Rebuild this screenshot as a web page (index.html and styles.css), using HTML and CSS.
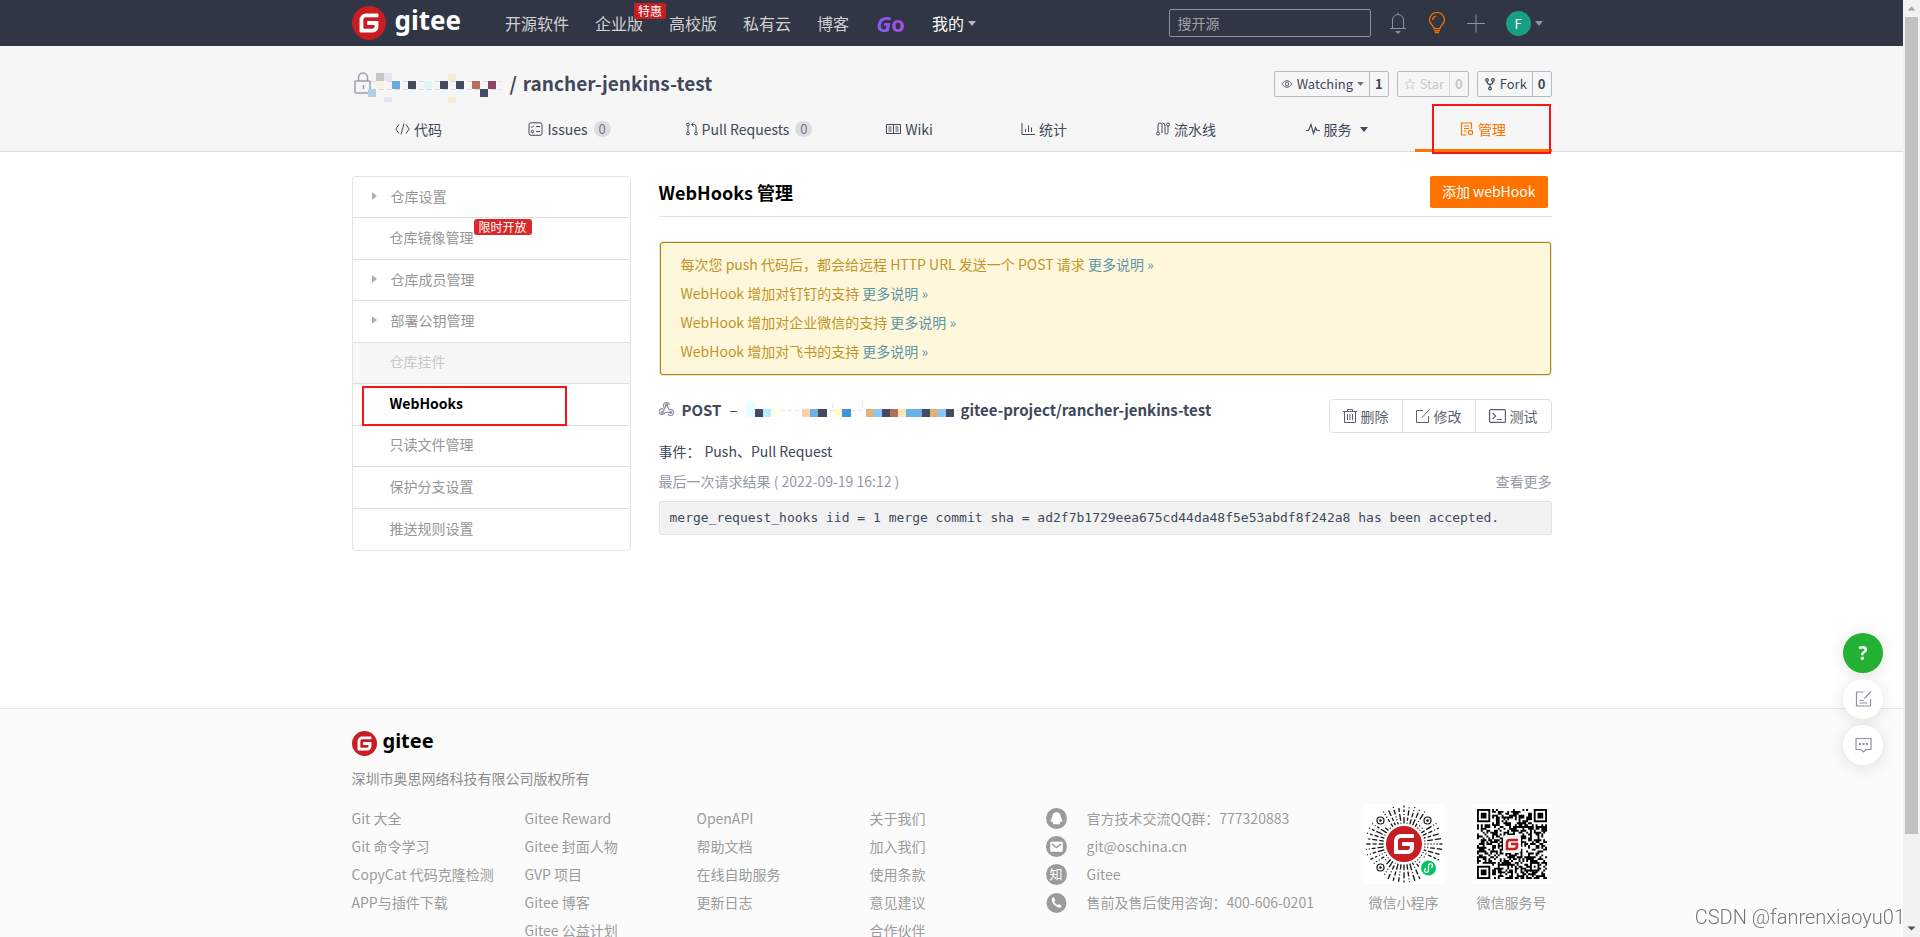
FILE: index.html
```html
<!DOCTYPE html>
<html lang="zh-CN">
<head>
<meta charset="utf-8">
<title>WebHooks 管理 - rancher-jenkins-test - Gitee</title>
<link rel="stylesheet" href="styles.css">
</head>
<body>
<svg class="defs" aria-hidden="true">
  <symbol id="g-mark" viewBox="0 0 24 24">
    <circle cx="12" cy="12" r="12" fill="#c71d23"/>
    <path fill="#fff" d="M18.074 5.333c.328 0 .593.266.592.593v1.482a.594.594 0 0 1-.593.592H9.777c-.982 0-1.778.796-1.778 1.778v5.63c0 .327.266.592.593.592h5.63c.982 0 1.778-.796 1.778-1.778v-.296a.593.593 0 0 0-.592-.593h-4.15a.592.592 0 0 1-.592-.592v-1.482a.593.593 0 0 1 .593-.592h6.815c.327 0 .593.265.593.592v3.408a4 4 0 0 1-4 4H5.926a.593.593 0 0 1-.593-.593V9.778a4.444 4.444 0 0 1 4.445-4.444h8.296Z"/>
  </symbol>
  <symbol id="caret" viewBox="0 0 10 6"><path d="M0 0h10L5 6z" fill="currentColor"/></symbol>
</svg>

<header class="topbar">
  <div class="container topbar-row">
    <a class="logo" href="#"><svg class="logo-mark"><use href="#g-mark"/></svg><span class="logo-word">gitee</span></a>
    <nav class="topnav">
      <a href="#">开源软件</a>
      <a href="#" class="has-badge">企业版<span class="sale">特惠</span></a>
      <a href="#">高校版</a>
      <a href="#">私有云</a>
      <a href="#">博客</a>
      <a href="#" class="go"><i>G</i>o</a>
      <a href="#" class="mine">我的<svg class="caret"><use href="#caret"/></svg></a>
    </nav>
    <div class="tools">
      <input class="search" type="text" placeholder="搜开源" aria-label="搜开源">
      <a href="#" aria-label="通知"><svg class="tool-icon" viewBox="0 0 18 22" fill="none" stroke="#8c92a4"><path d="M1 16.5h16M3.5 16.5V8a5.5 5.5 0 0 1 11 0v8.5M9 2.500V.5"/><path d="M6 19h6l-3 3z" fill="#8c92a4" stroke="none"/></svg></a>
      <a href="#" aria-label="动态"><svg class="tool-icon" viewBox="0 0 18 22" fill="none" stroke="#fe7300" stroke-width="1.2"><path d="M6 16.5c0-3-4.500-4-4.500-8.500a7.500 7.500 0 0 1 15 0c0 4.500-4.500 5.500-4.500 8.500zM4.500 8A4.500 4.500 0 0 1 8 4"/><path d="M6 18.500h6M7 20.500h4" stroke-width="1.5"/></svg></a>
      <a href="#" aria-label="新建"><svg class="tool-icon" viewBox="0 0 18 22" stroke="#8c92a4"><path d="M0 11.500h18M9 2.500v18"/></svg></a>
      <a href="#" class="user"><span class="avatar">F</span><svg class="caret"><use href="#caret"/></svg></a>
    </div>
  </div>
</header>

<section class="repo-head">
  <div class="container">
    <div class="repo-row">
      <h2 class="repo-title">
        <svg class="repo-owner" viewBox="0 0 150 32" shape-rendering="crispEdges">
          <g fill="none" stroke="#9ba0b0" stroke-width="1.5" shape-rendering="auto"><rect x="1" y="9" width="15" height="12" rx="1"/><path d="M4.500 9V5.500a4.500 4.500 0 0 1 9 0V9M9.500 13v4"/></g>
          <path d="M17 9h130M17 17h130" stroke="#dcdcdc" stroke-dasharray="5 3"/>
          <g fill="#454a60"><path d="M54 9h8v8h-8zM86 9h8v8h-8zM102 9h8v8h-8zM126 17h6v8h-6z"/></g>
          <path fill="#c8c5c8" d="M22 1h8v8h-8z"/><path fill="#e3e6f2" d="M30 1h8v8h-8zM30 25h8v5h-8z"/>
          <path fill="#f6f4e0" d="M22 9h8v8h-8z"/><path fill="#68a9e0" d="M38 9h8v8h-8z"/><path fill="#dff5f6" d="M70 9h8v8h-8z"/>
          <path fill="#b07058" d="M118 9h8v8h-8z"/><path fill="#8c4560" d="M134 9h8v8h-8z"/><path fill="#464a6b" d="M126 17h8v8h-8z"/>
          <path fill="#b2d1e8" d="M14 17h8v8h-8z"/><path fill="#f5edd0" d="M94 2h8v7h-8zM94 25h8v6h-8z"/>
        </svg>
        <span>/</span> <a href="#">rancher-jenkins-test</a>
      </h2>
      <div class="repo-actions">
        <div class="pair"><button type="button"><svg class="i12" viewBox="0 0 14 14" fill="none" stroke="currentColor"><path d="M1 7q6-8 12 0q-6 8-12 0z"/><circle cx="7" cy="7" r="2"/></svg>Watching<svg class="caret"><use href="#caret"/></svg></button><a href="#">1</a></div>
        <div class="pair off"><button type="button"><svg class="i12" viewBox="0 0 14 14" fill="none" stroke="currentColor"><path d="M7 1.500l1.600 3.700 4 .4-3 2.700.9 4L7 10.200l-3.500 2.100.9-4-3-2.700 4-.4z"/></svg>Star</button><a href="#">0</a></div>
        <div class="pair"><button type="button"><svg class="i12" viewBox="0 0 12 14" fill="none" stroke="currentColor" stroke-width="1.2"><circle cx="3" cy="3" r="1.300"/><circle cx="9" cy="3" r="1.300"/><circle cx="6" cy="11.500" r="1.300"/><path d="M3 4.500Q3 7 6 7.500Q9 7 9 4.500M6 7.500V10"/></svg>Fork</button><a href="#">0</a></div>
      </div>
    </div>
    <nav class="tabs">
      <a href="#"><svg class="i15" viewBox="0 0 15 14" fill="none" stroke="currentColor"><path d="M4 2.500L.8 7 4 11.500M11 2.500L14.200 7 11 11.500M9 1.500l-3 11"/></svg>代码</a>
      <a href="#"><svg class="i15" viewBox="0 0 15 14" fill="none" stroke="currentColor"><rect x="1" y=".8" width="13" height="12.500" rx="2"/><path d="M8 4.500h4M8 9.500h4M3 4.500l1 1 2-2"/><circle cx="4.500" cy="9.500" r="1.200"/></svg>Issues<span class="count">0</span></a>
      <a href="#"><svg class="i12" viewBox="0 0 12 14" fill="none" stroke="currentColor"><circle cx="2" cy="2.500" r="1.400"/><circle cx="2" cy="11.500" r="1.400"/><circle cx="10" cy="11.500" r="1.400"/><path d="M2 4v6M10 10V4.500q0-2-2-2H5.500M7.500.5l-2 2 2 2"/></svg>Pull Requests<span class="count">0</span></a>
      <a href="#"><svg class="i15" viewBox="0 0 15 14" fill="none" stroke="currentColor"><path d="M.5 2.500h14v9H.5zM7.500 2.500v9M2.500 5h3M2.500 7h3M2.500 9h3M9.500 5h3M9.500 7h3M9.500 9h3"/></svg>Wiki</a>
      <a href="#"><svg class="i14" viewBox="0 0 14 14" fill="none" stroke="currentColor"><path d="M1 1v11.500h13M4.500 10V7M7.500 10V3.500M10.500 10V5.500"/></svg>统计</a>
      <a href="#"><svg class="i14" viewBox="0 0 14 14" fill="none" stroke="currentColor"><circle cx="2" cy="11.500" r="1.500"/><circle cx="12" cy="2.500" r="1.500"/><path d="M2 10V3a2 2 0 0 1 4 0v8M9 3v7.500a1.500 1.500 0 0 0 3 0V4M9 3.500Q9 1 6.500 1"/></svg>流水线</a>
      <a href="#"><svg class="i14" viewBox="0 0 14 14" fill="none" stroke="currentColor" stroke-width="1.2"><path d="M0 8.500h2.500L5 2.500l2.500 9 2-6 1.500 3H14"/></svg>服务<svg class="caret"><use href="#caret"/></svg></a>
      <a href="#" class="active"><svg class="i14" viewBox="0 0 14 14" fill="none" stroke="currentColor" stroke-width="1.2"><path d="M6.500 13H1.500V1h10v6M4 4h5M4 6.500h5M4 9h2.500"/><circle cx="10.500" cy="10.500" r="2.200"/></svg>管理<span class="mark"></span></a>
    </nav>
  </div>
</section>

<main class="container content">
  <ul class="side">
    <li class="sub"><a href="#">仓库设置</a></li>
    <li><a href="#">仓库镜像管理<span class="limited">限时开放</span></a></li>
    <li class="sub"><a href="#">仓库成员管理</a></li>
    <li class="sub"><a href="#">部署公钥管理</a></li>
    <li class="off"><a href="#">仓库挂件</a></li>
    <li class="current"><a href="#">WebHooks</a><span class="mark"></span></li>
    <li><a href="#">只读文件管理</a></li>
    <li><a href="#">保护分支设置</a></li>
    <li><a href="#">推送规则设置</a></li>
  </ul>
  <div class="panel">
    <div class="panel-head"><h1>WebHooks 管理</h1><button type="button" class="primary">添加 webHook</button></div>
    <div class="notice">
      <p>每次您 push 代码后，都会给远程 HTTP URL 发送一个 POST 请求 <a href="#">更多说明 »</a></p>
      <p>WebHook 增加对钉钉的支持 <a href="#">更多说明 »</a></p>
      <p>WebHook 增加对企业微信的支持 <a href="#">更多说明 »</a></p>
      <p>WebHook 增加对飞书的支持 <a href="#">更多说明 »</a></p>
    </div>
    <div class="hook">
      <div class="hook-title">
        <svg class="hook-icon" viewBox="0 0 15 15" fill="none" stroke="#8c92a4" stroke-width="1.2"><path d="M5.200 6.500A3 3 0 1 1 10.400 4M7.500 3.800l2.600 5A3 3 0 1 1 9 13M7.500 3.800L4.200 10.500M4.500 8A3 3 0 1 0 6 11.500h5.500"/><circle cx="7.500" cy="3.800" r="1"/><circle cx="3.300" cy="11.300" r="1"/><circle cx="11.700" cy="11.300" r="1"/></svg>
        <b>POST</b><span>–</span>
        <svg class="hook-url" viewBox="0 0 215 18" shape-rendering="crispEdges">
          <path d="M0 9h214M17 6v12M86 3v6M116 2v6" stroke="#e2e2e6" stroke-dasharray="4 3"/>
          <path fill="#e5ffff" d="M0 1h9v15H0z"/><path fill="#b5ecff" d="M17 8h8v8h-8z"/><path fill="#ffffe6" d="M25 8h7v8h-7z"/>
          <path fill="#454a60" d="M9 8h8v8H9zM72 8h9v8h-9zM136 8h8v8h-8zM176 8h8v8h-8zM200 8h8v8h-8z"/>
          <path fill="#ffd0a0" d="M56 8h8v8h-8z"/><path fill="#6cb0ea" d="M64 8h8v8h-8zM160 8h16v8h-16z"/>
          <path fill="#ffffcc" d="M88 8h8v8h-8z"/><path fill="#3f93d8" d="M96 8h9v8h-9z"/>
          <path fill="#e3b07c" d="M120 8h8v8h-8zM184 8h8v8h-8z"/><path fill="#88c8ff" d="M128 8h8v8h-8zM192 8h8v8h-8z"/>
          <path fill="#b07058" d="M144 8h8v8h-8z"/><path fill="#ffe5b5" d="M152 8h8v8h-8z"/>
        </svg>
        <a href="#">gitee-project/rancher-jenkins-test</a>
      </div>
      <div class="hook-actions">
        <button type="button"><svg class="i14" viewBox="0 0 14 14" fill="none" stroke="currentColor"><path d="M0 2.500h14M4.500 2.500V.5h5v2M1.500 2.500v11h11v-11M4.500 5v6M7 5v6M9.500 5v6"/></svg>删除</button>
        <button type="button"><svg class="i14" viewBox="0 0 14 14" fill="none" stroke="currentColor"><path d="M7 1.500H.5v12h12V7M6 8.500L13.500.5"/></svg>修改</button>
        <button type="button"><svg class="i17" viewBox="0 0 17 14" fill="none" stroke="currentColor" stroke-width="1.2"><rect x=".6" y=".6" width="15.800" height="12.800" rx="1"/><path d="M3.500 4l3 3-3 3M8 10.500h5"/></svg>测试</button>
      </div>
    </div>
    <p class="events">事件：<span>Push、Pull Request</span></p>
    <div class="last"><span>最后一次请求结果 ( 2022-09-19 16:12 )</span><a href="#">查看更多</a></div>
    <pre class="result">merge_request_hooks iid = 1 merge commit sha = ad2f7b1729eea675cd44da48f5e53abdf8f242a8 has been accepted.</pre>
  </div>
</main>

<footer class="footer">
  <div class="container">
    <a class="logo small" href="#"><svg class="logo-mark"><use href="#g-mark"/></svg><span class="logo-word">gitee</span></a>
    <p class="company">深圳市奥思网络科技有限公司版权所有</p>
    <div class="foot-grid">
      <ul><li><a href="#">Git 大全</a></li><li><a href="#">Git 命令学习</a></li><li><a href="#">CopyCat 代码克隆检测</a></li><li><a href="#">APP与插件下载</a></li></ul>
      <ul><li><a href="#">Gitee Reward</a></li><li><a href="#">Gitee 封面人物</a></li><li><a href="#">GVP 项目</a></li><li><a href="#">Gitee 博客</a></li><li><a href="#">Gitee 公益计划</a></li></ul>
      <ul><li><a href="#">OpenAPI</a></li><li><a href="#">帮助文档</a></li><li><a href="#">在线自助服务</a></li><li><a href="#">更新日志</a></li></ul>
      <ul><li><a href="#">关于我们</a></li><li><a href="#">加入我们</a></li><li><a href="#">使用条款</a></li><li><a href="#">意见建议</a></li><li><a href="#">合作伙伴</a></li></ul>
      <ul class="contact">
        <li><svg viewBox="0 0 20 20"><circle cx="10" cy="10" r="10" fill="#9b9b9b"/><path fill="#fff" d="M10 4c-3 0-4 2.200-4 4.500C5 10 4.300 11.500 4.600 13c.3.500.9 0 1.300-.5.200.8.600 1.300 1.100 1.700-.8.500-.5 1.300.5 1.300h5c1 0 1.300-.8.500-1.300.5-.4.900-.9 1.100-1.700.4.500 1 1 1.300.5.300-1.500-.4-3-1.400-4.500C14 6.200 13 4 10 4z"/></svg><a href="#">官方技术交流QQ群：777320883</a></li>
        <li><svg viewBox="0 0 20 20"><circle cx="10" cy="10" r="10" fill="#9b9b9b"/><rect x="4" y="5.500" width="12" height="9.500" rx="1" fill="#fff"/><path d="M5.500 7.500L10 11l4.500-3.500" fill="none" stroke="#9b9b9b" stroke-width="1.3"/></svg><a href="#">git@oschina.cn</a></li>
        <li><span class="zhi">知</span><a href="#">Gitee</a></li>
        <li><svg viewBox="0 0 20 20"><circle cx="10" cy="10.500" r="9.500" fill="#9b9b9b"/><path d="M6 5.500Q4.500 7 6.500 10.500T13 15q1.500 0 2-1.500l-2.500-2-1.500 1Q8.500 11 7.700 9L9 8 7.500 5z" fill="#fff"/></svg><span>售前及售后使用咨询：400-606-0201</span></li>
      </ul>
      <figure><svg id="mini-code" viewBox="0 0 80 80"></svg><figcaption>微信小程序</figcaption></figure>
      <figure><svg id="qr-code" viewBox="0 0 80 80"></svg><figcaption>微信服务号</figcaption></figure>
    </div>
  </div>
</footer>

<div class="floats">
  <button type="button" class="help">?</button>
  <button type="button" aria-label="反馈"><svg viewBox="0 0 16 16" fill="none" stroke="#8c92a4" stroke-width="1.2"><path d="M8 1H1v14h14V8M15.500.5L9 7.500M4 9.500h4M4 12h8"/></svg></button>
  <button type="button" aria-label="留言"><svg viewBox="0 0 17 16" fill="none" stroke="#8c92a4" stroke-width="1.2"><path d="M1 1.500h15v11h-5L8.500 15 6 12.500H1z"/><path d="M4 7h2M7.500 7h2M11 7h2" stroke-width="2"/></svg></button>
</div>
<div class="scroll" aria-hidden="true"><svg viewBox="0 0 17 17"><path d="M4.500 10.500h8l-4-4z" fill="#a3a3a3"/></svg><span class="thumb"></span><svg viewBox="0 0 17 17"><path d="M4.500 6.500h8l-4 4z" fill="#505050"/></svg></div>
<div class="credit">CSDN @fanrenxiaoyu01</div>
<script src="codes.js"></script>
</body>
</html>
```

FILE: styles.css
```css
* { box-sizing: border-box; }
html, body { height: 100%; }
body {
  margin: 0;
  padding-right: 17px;
  overflow: hidden;
  background: #fff;
  color: #40485b;
  font: 14px/20px "Noto Sans CJK SC", "Open Sans", sans-serif;
}
h1, h2, p, ul, pre, figure { margin: 0; padding: 0; font-weight: inherit; }
ul { list-style: none; }
a { color: inherit; text-decoration: none; }
button, input { font: inherit; color: inherit; }
button { border: 0; background: none; padding: 0; }
svg { display: block; flex: none; }
.defs { position: absolute; width: 0; height: 0; }
.container { width: 1200px; max-width: 100%; margin: 0 auto; }
.caret { width: 8px; height: 5px; }
.i12 { width: 12px; height: 14px; }
.i14 { width: 14px; height: 14px; }
.i15 { width: 15px; height: 14px; }
.i17 { width: 17px; height: 14px; }

/* top bar */
.topbar { background: #303643; }
.topbar-row { display: flex; align-items: center; height: 46px; }
.logo { display: flex; align-items: center; gap: 9px; color: #fff; }
.logo-mark { width: 34px; height: 34px; }
.logo-word { font: bold 26px/30px "Noto Sans", sans-serif; padding-bottom: 6px; }
.topnav { display: flex; align-items: center; gap: 26px; margin-left: 44px; font-size: 16px; line-height: 24px; color: #d0d2d6; }
.has-badge { position: relative; }
.sale { position: absolute; left: 39px; top: -8px; width: 32px; background: #c71d23; color: #fff; border-radius: 2px; font-size: 12px; line-height: 16px; text-align: center; z-index: 1; }
.go { padding: 0 1px; font: bold 22px/24px "Open Sans", sans-serif; background: linear-gradient(90deg, #7b5cf5, #b04be8); background-clip: text; -webkit-background-clip: text; color: transparent; }
.mine { display: flex; align-items: center; gap: 4px; color: #fff; }
.mine .caret { color: #b4b7bd; }
.tools { display: flex; align-items: center; gap: 21px; margin-left: auto; padding-right: 9px; }
.search { width: 202px; height: 28px; margin-right: -3px; padding: 0 8px; background: transparent; border: 1px solid #8c92a4; border-radius: 2px; color: #fff; }
.search::placeholder { color: #a0a2a8; opacity: 1; }
.tool-icon { width: 18px; height: 22px; }
.user { display: flex; align-items: center; gap: 4px; color: #8c92a4; }
.avatar { width: 25px; height: 25px; border-radius: 50%; background: #17a086; color: #fff; font-size: 13px; line-height: 25px; text-align: center; }

/* repository header */
.repo-head { background: #f6f6f6; border-bottom: 1px solid #dcddde; }
.repo-row { display: flex; justify-content: space-between; padding-top: 24px; height: 62px; }
.repo-title { display: flex; gap: 6px; font-weight: 700; font-size: 19px; line-height: 26px; }
.repo-owner { width: 150px; height: 32px; margin: 2px 0 0 2px; }
.repo-actions { display: flex; gap: 8px; align-items: flex-start; }
.pair { display: flex; height: 26px; margin-top: 1px; border: 1px solid #b9bbc8; border-radius: 2px; line-height: 24px; }
.pair button { display: flex; align-items: center; gap: 4px; padding: 0 5px 0 6px; }
.pair a { padding: 0 5px; border-left: 1px solid #b9bbc8; font-weight: 700; }
.pair .caret { width: 7px; height: 4px; color: #6a7080; }
.pair { font-size: 13px; }
.off { color: #c6c6c6; }
.pair.off a { border-color: #dcdcdc; }
.tabs { display: grid; grid-template-columns: 134fr 168fr 191fr 130fr 139fr 145fr 156fr 137fr; height: 43px; }
.tabs a { position: relative; display: flex; align-items: center; justify-content: center; gap: 4px; padding-bottom: 1px; white-space: nowrap; }
.tabs .caret { margin-left: 4px; }
.count { min-width: 17px; margin-left: 2px; padding: 0 4px; border-radius: 8px; background: #dcdddf; color: #6f7692; font-size: 13px; line-height: 16px; text-align: center; }
.tabs .active { color: #fe7300; border-bottom: 3px solid #fe7300; margin-bottom: -1px; padding: 0; }
.mark { position: absolute; border: 2px solid #f81418; pointer-events: none; }
.tabs .mark { left: 17px; right: 1px; top: -4px; bottom: -5px; }

/* page body */
.content { display: flex; gap: 28px; align-items: flex-start; min-height: 556px; padding-top: 24px; }
.side { display: grid; grid-auto-rows: 1fr; width: 279px; min-height: 375px; flex: none; border: 1px solid #e1e4e8; border-radius: 4px; color: #969696; }
.side li { position: relative; display: flex; align-items: center; padding: 0 0 3px 37px; border-bottom: 1px solid #dcdee0; }
.side li:last-child { border-bottom: 0; }
.side a { position: relative; }
.side .sub::before { content: ""; margin: 0 14px 0 -18px; border: 4px solid transparent; border-left: 5px solid #b0b0b0; border-right: 0; }
.side .off { background: #f7f7f7; color: #c8c8c8; }
.side .current { color: #000; font-weight: 700; }
.side .mark { left: 9px; width: 205px; top: 2px; bottom: -1px; z-index: 1; }
.limited { position: absolute; left: 84px; top: -8px; padding: 0 5px; border-radius: 3px; background: #db2828; color: #fff; font-size: 12px; line-height: 16px; white-space: nowrap; }
.panel { flex: 1; min-width: 0; }
.panel-head { display: flex; justify-content: space-between; align-items: flex-start; height: 41px; padding-right: 4px; border-bottom: 1px solid #e0e1e2; }
.panel-head h1 { font-size: 18px; line-height: 32px; font-weight: 700; color: #000; }
.primary { height: 32px; padding: 0 12px 2px; background: #fe7300; color: #fff; border-radius: 2px; }
.notice { margin: 25px 1px 0; padding: 7px 20px 8px; background: #fff7db; border: 1px solid #b58105; border-radius: 3px; box-shadow: 0 0 0 1px #e6e7ea; color: #c09527; }
.notice p { line-height: 29px; }
.notice a { color: #5a96a5; }
.hook { display: flex; justify-content: space-between; align-items: flex-start; margin-top: 24px; }
.hook-title { display: flex; align-items: center; gap: 8px; font-size: 15px; line-height: 22px; }
.hook-icon { width: 15px; height: 15px; margin-bottom: 4px; }
.hook-url { width: 215px; height: 18px; margin-right: -8px; }
.hook-title a { font-weight: 700; }
.hook-actions { display: flex; border: 1px solid #dcdde0; border-radius: 4px; color: #5a6070; }
.hook-actions button { display: flex; align-items: center; gap: 4px; height: 32px; padding: 0 13px 1px; }
.hook-actions button + button { border-left: 1px solid #dcdde0; }
.events { margin-top: 8px; }
.events span { margin-left: 4px; }
.last { display: flex; justify-content: space-between; margin-top: 10px; color: #9499a8; }
.result { margin-top: 10px; padding: 6px 10px; overflow: hidden; background: #f2f2f2; border: 1px solid #e2e3e5; border-radius: 2px; font: 13px/20px "DejaVu Sans Mono", monospace; color: #40485b; }

/* footer */
.footer { background: #fbfbfb; border-top: 1px solid #e1e4e8; padding: 17px 0 24px; color: #9b9b9b; }
.logo.small { gap: 6px; color: #000; }
.small .logo-mark { width: 25px; height: 25px; }
.small .logo-word { font-size: 20px; padding-bottom: 4px; }
.company { margin-top: 8px; color: #8c8c8c; }
.foot-grid { display: grid; grid-template-columns: 173px 172px 173px 176px 318px 80px 80px; margin-top: 16px; line-height: 28px; }
.foot-grid figure:last-child { margin-left: 28px; }
.contact li { display: flex; align-items: center; gap: 20px; }
.contact svg, .zhi { width: 21px; height: 21px; }
.zhi { border-radius: 50%; background: #9b9b9b; color: #fff; font-size: 13px; line-height: 20px; text-align: center; }
.foot-grid figure { width: 80px; text-align: center; }
.foot-grid figure svg { width: 80px; height: 80px; }
.foot-grid figcaption { line-height: 36px; }

/* overlays */
.floats { position: fixed; right: 37px; bottom: 172px; display: grid; gap: 6px; }
.floats button { display: grid; place-items: center; width: 40px; height: 40px; border-radius: 50%; background: #fff; box-shadow: 0 2px 16px rgba(0, 0, 0, .12); }
.floats svg { width: 17px; height: 16px; }
.floats .help { background: #23b134; color: #fff; font: bold 19px/40px "Open Sans", sans-serif; }
.scroll { position: fixed; top: 0; right: 0; bottom: 0; width: 17px; display: flex; flex-direction: column; background: #f1f1f1; }
.scroll svg { width: 17px; height: 17px; }
.thumb { flex: none; height: 87.2%; width: 13px; margin: 0 2px auto; background: #c1c1c1; }
.credit { position: fixed; right: 15px; bottom: 8px; font: 300 20px/24px Roboto, sans-serif; color: #777; text-shadow: -1px -1px 0 #fff; }
```

FILE: codes.js
```js
const NS = "http://www.w3.org/2000/svg";

function add(parent, tag, attrs) {
  const el = document.createElementNS(NS, tag);
  for (const key in attrs) el.setAttribute(key, attrs[key]);
  parent.appendChild(el);
  return el;
}

function randomFrom(seed) {
  return () => (seed = (seed * 16807) % 2147483647) / 2147483647;
}

function drawQr(svg) {
  const n = 37, size = 70 / n, rnd = randomFrom(4242);
  const g = add(svg, "g", {});
  add(g, "rect", { width: 80, height: 80, fill: "#fff" });
  let d = "";
  const cell = (x, y, w) => {
    d += `M${5 + x * size} ${5 + y * size}h${w * size}v${size}h${-w * size}z`;
  };
  const inFinder = (x, y) => (x < 8 && y < 8) || (x > n - 9 && y < 8) || (x < 8 && y > n - 9);
  for (let y = 0; y < n; y++)
    for (let x = 0; x < n; x++)
      if (!inFinder(x, y) && rnd() < 0.52) cell(x, y, 1);
  add(g, "path", { d, fill: "#000" });
  [[0, 0], [n - 7, 0], [0, n - 7], [n - 9, n - 9]].forEach(([x, y], i) => {
    const w = i < 3 ? 7 : 5, inner = i < 3 ? 3 : 1;
    const box = (o, k, fill) => add(g, "rect", { x: 5 + (x + o) * size, y: 5 + (y + o) * size, width: k * size, height: k * size, fill });
    box(0, w, "#000");
    box(1, w - 2, "#fff");
    box(2, inner, "#000");
  });
  add(g, "rect", { x: 31, y: 31, width: 18, height: 18, rx: 3, fill: "#f3f3f3" });
  add(g, "path", { d: "M46 36H38q-3 0-3 3v6h7q3 0 3-3v-2h-6", fill: "none", stroke: "#c71d23", "stroke-width": 2.5 });
}

function drawMini(svg) {
  const rnd = randomFrom(77);
  add(svg, "rect", { width: 80, height: 80, fill: "#fff" });
  const spots = [[16.5, 16.5], [63.5, 16.5], [16.5, 63.5]];
  const rays = 44;
  for (let i = 0; i < rays; i++) {
    const a = (i / rays) * Math.PI * 2;
    for (let r = 20.5; r < 38;) {
      const len = rnd() < 0.4 ? 1 : 2 + rnd() * 5, e = Math.min(r + len, 38.5);
      const p = k => [40 + Math.cos(a) * k, 40 + Math.sin(a) * k];
      const [x1, y1] = p(r), [x2, y2] = p(e);
      const clash = spots.some(([x, y]) => Math.hypot(x - x2, y - y2) < 6.5 || Math.hypot(x - x1, y - y1) < 6.5);
      if (!clash && Math.hypot(64 - x2, 64 - y2) > 9)
        add(svg, "line", { x1, y1, x2, y2, stroke: "#111", "stroke-width": 1.3 });
      r = e + 2;
    }
  }
  spots.forEach(([cx, cy]) => {
    add(svg, "circle", { cx, cy, r: 3.5, fill: "none", stroke: "#111", "stroke-width": 1.2 });
    add(svg, "circle", { cx, cy, r: 1.3, fill: "#111" });
  });
  add(svg, "use", { href: "#g-mark", x: 22, y: 22, width: 36, height: 36 });
  add(svg, "circle", { cx: 64.5, cy: 64, r: 7.5, fill: "#07c160" });
  add(svg, "path", { d: "M62 64.5a2 2 0 1 0 2.500 2v-5a2 2 0 1 1 2.500 2", fill: "none", stroke: "#fff", "stroke-width": 1.3 });
}

drawQr(document.getElementById("qr-code"));
drawMini(document.getElementById("mini-code"));
```
